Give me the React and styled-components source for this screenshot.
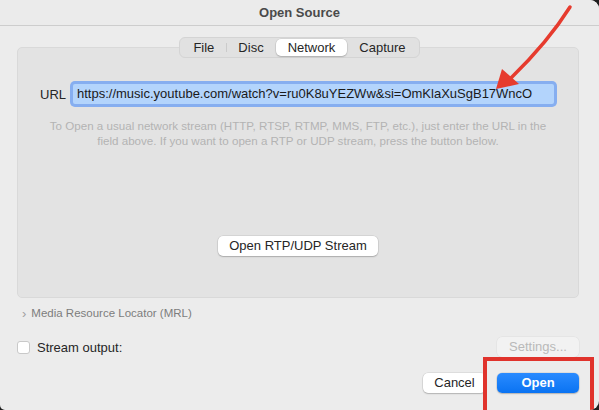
import React from "react";
import styled, { createGlobalStyle } from "styled-components";

const GlobalStyle = createGlobalStyle`
  html, body {
    margin: 0;
    padding: 0;
    background: #1f1f1f;
  }
  body {
    font-family: "Liberation Sans", Arial, sans-serif;
    font-size: 13px;
    color: #262626;
  }
`;

const TABS = [
  { name: "File" },
  { name: "Disc", divider: true },
  { name: "Network", active: true },
  { name: "Capture" },
];

const URL_TEXT =
  "https://music.youtube.com/watch?v=ru0K8uYEZWw&si=OmKlaXuSgB17WncO";

export default function App() {
  return (
    <>
      <GlobalStyle />
      <Window>
        <TitleBar>
          <Title>Open Source</Title>
        </TitleBar>

        <Body>
          <Tabs>
            {TABS.map((t) => (
              <Tab key={t.name} $active={t.active} $divider={t.divider}>
                {t.name}
              </Tab>
            ))}
          </Tabs>

          <Panel>
            <UrlRow>
              <Label>URL</Label>
              <UrlField>{URL_TEXT}</UrlField>
            </UrlRow>
            <Hint>
              To Open a usual network stream (HTTP, RTSP, RTMP, MMS, FTP, etc.), just enter the URL in the
              <br />
              field above. If you want to open a RTP or UDP stream, press the button below.
            </Hint>
            <PanelButton>Open RTP/UDP Stream</PanelButton>
          </Panel>

          <Disclosure>
            <Chevron>›</Chevron>
            Media Resource Locator (MRL)
          </Disclosure>

          <OutputRow>
            <CheckLabel>
              <Checkbox />
              Stream output:
            </CheckLabel>
            <Button $disabled>Settings...</Button>
          </OutputRow>

          <Actions>
            <Button $width="63px">Cancel</Button>
            <Button $primary>Open</Button>
          </Actions>
        </Body>

        <Highlight />
        <Arrow width="599" height="410" viewBox="0 0 599 410">
          <path
            d="M570 7 Q548 42 511 78"
            fill="none"
            stroke="#e63b2e"
            strokeWidth="3.5"
            strokeLinecap="round"
          />
          <polygon points="496,89 502,69 519,84" fill="#e63b2e" />
        </Arrow>
      </Window>
    </>
  );
}

const Window = styled.div`
  position: relative;
  width: 599px;
  height: 410px;
  background: #ececec;
  border-radius: 0 9px 9px 5px;
  overflow: hidden;
  display: flex;
  flex-direction: column;
`;

const TitleBar = styled.div`
  height: 25px;
  flex: none;
  display: flex;
  align-items: center;
  justify-content: center;
  background: #ebebeb;
  border-bottom: 1px solid #cdcdcd;
`;

const Title = styled.div`
  font-weight: bold;
  font-size: 13px;
  color: #4a4a4a;
`;

const Body = styled.div`
  display: flex;
  flex-direction: column;
  padding: 11px 20px 0 17px;
`;

const Tabs = styled.div`
  position: relative;
  z-index: 1;
  align-self: center;
  margin-left: 3px;
  display: flex;
  height: 21px;
  box-sizing: border-box;
  padding: 1px;
  background: #e1e1e1;
  border: 1px solid #d4d4d4;
  border-radius: 6px;
`;

const Tab = styled.div`
  position: relative;
  display: flex;
  align-items: center;
  padding: 0 12px;
  font-size: 13px;
  color: #262626;
  border-radius: 5px;
  background: ${(p) => (p.$active ? "#ffffff" : "transparent")};
  box-shadow: ${(p) =>
    p.$active ? "0 0 0 0.5px rgba(0,0,0,0.1), 0 1px 1.5px rgba(0,0,0,0.18)" : "none"};

  &::before {
    content: "";
    display: ${(p) => (p.$divider ? "block" : "none")};
    position: absolute;
    left: 0;
    top: 4px;
    bottom: 4px;
    width: 1px;
    background: #cbcbcb;
  }
`;

const Panel = styled.div`
  margin-top: -11px;
  height: 251px;
  box-sizing: border-box;
  background: #e3e3e3;
  border: 1px solid #d9d9d9;
  border-radius: 5px;
  display: flex;
  flex-direction: column;
  padding: 36px 22px 41px 22px;
`;

const UrlRow = styled.div`
  display: flex;
  align-items: center;
  gap: 7px;
`;

const Label = styled.div`
  font-size: 13px;
  color: #262626;
`;

const UrlField = styled.div`
  flex: 1;
  height: 20px;
  line-height: 20px;
  padding: 0 4px;
  margin-right: 2px;
  background: #b3d4fc;
  color: #1a1a1a;
  font-size: 13px;
  white-space: nowrap;
  overflow: hidden;
  border-radius: 2px;
  box-shadow: 0 0 0 3px #86aef0;
`;

const Hint = styled.div`
  margin-top: 14px;
  text-align: center;
  font-size: 11.6px;
  line-height: 15px;
  color: #b3b3b3;
  white-space: nowrap;
`;

const PanelButton = styled.div`
  margin-top: auto;
  align-self: center;
  height: 20px;
  line-height: 20px;
  padding: 0 11px;
  background: #ffffff;
  border-radius: 5px;
  font-size: 13px;
  color: #262626;
  box-shadow: 0 0 0 0.5px rgba(0, 0, 0, 0.12), 0 1px 1.5px rgba(0, 0, 0, 0.2);
`;

const Disclosure = styled.div`
  margin-top: 8px;
  height: 14px;
  display: flex;
  align-items: center;
  padding-left: 5px;
  font-size: 11.5px;
  color: #7d7d7d;
`;

const Chevron = styled.span`
  font-size: 13px;
  color: #a0a0a0;
  margin-right: 5px;
`;

const OutputRow = styled.div`
  margin-top: 17px;
  display: flex;
  align-items: center;
  justify-content: space-between;
`;

const CheckLabel = styled.div`
  display: flex;
  align-items: center;
  gap: 7px;
  font-size: 13px;
  color: #262626;
`;

const Checkbox = styled.span`
  width: 13px;
  height: 13px;
  box-sizing: border-box;
  background: #ffffff;
  border: 1px solid #c9c9c9;
  border-radius: 3px;
`;

const Button = styled.div`
  width: ${(p) => p.$width || "82px"};
  height: 20px;
  line-height: 20px;
  text-align: center;
  border-radius: 5px;
  font-size: 13px;
  font-weight: ${(p) => (p.$primary ? "bold" : "normal")};
  color: ${(p) => (p.$primary ? "#ffffff" : p.$disabled ? "#b9b9b9" : "#262626")};
  background: ${(p) =>
    p.$primary
      ? "linear-gradient(#2a8bff, #0a73f2)"
      : p.$disabled
      ? "#f2f2f2"
      : "#ffffff"};
  box-shadow: ${(p) =>
    p.$disabled
      ? "0 0 0 0.5px rgba(0,0,0,0.06)"
      : "0 0 0 0.5px rgba(0,0,0,0.12), 0 1px 1.5px rgba(0,0,0,0.2)"};
`;

const Actions = styled.div`
  margin-top: 16px;
  display: flex;
  justify-content: flex-end;
  gap: 11px;
`;

const Highlight = styled.div`
  position: absolute;
  left: 483px;
  top: 357px;
  width: 111px;
  height: 60px;
  box-sizing: border-box;
  border: 4px solid #e0332c;
  pointer-events: none;
`;

const Arrow = styled.svg`
  position: absolute;
  left: 0;
  top: 0;
  pointer-events: none;
`;
